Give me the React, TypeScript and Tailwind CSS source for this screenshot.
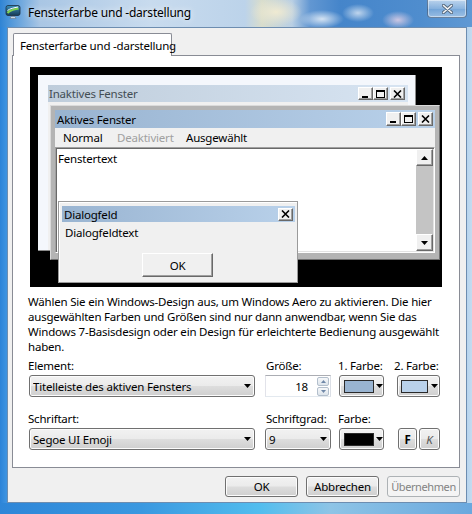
import React from "react";

const win7Btn =
  "border border-[#707070] rounded-[3px] bg-[linear-gradient(180deg,#f2f2f2_0%,#ebebeb_48%,#dddddd_52%,#cfcfcf_100%)] shadow-[inset_0_0_0_1px_#fcfcfc]";

const classicRaised =
  "bg-[#f0f0f0] border border-t-white border-l-white border-r-[#696969] border-b-[#696969] shadow-[inset_-1px_-1px_0_#a0a0a0]";

function DownArrow({ color = "#000" }: { color?: string }) {
  return (
    <svg width="7" height="4" viewBox="0 0 7 4" className="shrink-0">
      <path d="M0 0H7L3.5 4Z" fill={color} />
    </svg>
  );
}

function CapBtn({ kind, w, h }: { kind: "min" | "max" | "close"; w: number; h: number }) {
  return (
    <div
      className={`${classicRaised} flex items-center justify-center shrink-0`}
      style={{ width: w, height: h }}
    >
      <svg width="9" height="8" viewBox="0 0 9 8">
        {kind === "min" && <rect x="1" y="6" width="6" height="2" fill="#000" />}
        {kind === "max" && (
          <path d="M0 0H9V8H0Z M1 2V7H8V2Z" fill="#000" fillRule="evenodd" />
        )}
        {kind === "close" && (
          <path d="M1 0.5L8 7.5M8 0.5L1 7.5" stroke="#000" strokeWidth="1.6" />
        )}
      </svg>
    </div>
  );
}

function ScrollBtn({ up }: { up: boolean }) {
  return (
    <div className={`${classicRaised} w-[17px] h-[17px] flex items-center justify-center`}>
      <svg width="7" height="4" viewBox="0 0 7 4">
        <path d={up ? "M0 4H7L3.5 0Z" : "M0 0H7L3.5 4Z"} fill="#000" />
      </svg>
    </div>
  );
}

function Preview() {
  return (
    <div className="relative ml-[2px] w-[412px] h-[220px] bg-black overflow-hidden">
      {/* inactive window */}
      <div className="absolute left-[8px] top-[8px] w-[378px] h-[176px] flex flex-col bg-[#f4f7fc] border-r border-b border-r-[#8a8a8a] border-b-[#8a8a8a] pl-[10px] pt-[10px] pr-[7px]">
        <div className="h-[17px] flex items-center bg-[linear-gradient(90deg,#bfcddb,#d7e4f2)] pl-[1px] pr-[3px]">
          <span className="flex-1 text-[#434e54]">Inaktives Fenster</span>
          <CapBtn kind="min" w={15} h={13} />
          <CapBtn kind="max" w={15} h={13} />
          <div className="w-[2px]" />
          <CapBtn kind="close" w={15} h={13} />
        </div>
        <div className="flex-1 bg-[#f0f0f0]" />
      </div>

      {/* active window */}
      <div className="absolute left-[20px] top-[38px] w-[390px] h-[155px] flex flex-col bg-[#b4b4b4] border border-t-[#dadada] border-l-[#dadada] border-r-[#6f6f6f] border-b-[#6f6f6f] px-[4px] pt-[4px] pb-[6px]">
        <div className="h-[18px] flex items-center bg-[linear-gradient(90deg,#99b4d1,#b9d1ea)] pl-[2px] pr-[2px]">
          <span className="flex-1">Aktives Fenster</span>
          <CapBtn kind="min" w={15} h={14} />
          <CapBtn kind="max" w={15} h={14} />
          <div className="w-[2px]" />
          <CapBtn kind="close" w={15} h={14} />
        </div>
        <div className="h-[19px] flex items-center bg-[#f0f0f0] pl-[8px]">
          <span className="w-[54px]">Normal</span>
          <span className="w-[69px] text-[#a0a0a0]">Deaktiviert</span>
          <span>Ausgewählt</span>
        </div>
        <div className="flex-1 flex bg-white border border-t-[#a0a0a0] border-l-[#a0a0a0] border-r-white border-b-white shadow-[inset_1px_1px_0_#696969,inset_-1px_-1px_0_#e3e3e3]">
          <div className="flex-1 flex m-[1px]">
            <div className="flex-1 pl-[1px] pt-[2px]">Fenstertext</div>
            <div className="w-[17px] flex flex-col bg-[#c4c4c4]">
              <ScrollBtn up />
              <div className="flex-1" />
              <ScrollBtn up={false} />
            </div>
          </div>
        </div>
      </div>

      {/* dialog */}
      <div className="absolute left-[28px] top-[134px] w-[240px] h-[82px] flex flex-col bg-[#f0f0f0] border border-[#9a9a9a] shadow-[inset_1px_1px_0_#ffffff] pl-[3px] pt-[4px] pr-[2px]">
        <div className="h-[16px] flex items-center bg-[linear-gradient(90deg,#99b4d1,#b9d1ea)] pl-[2px] pr-[2px]">
          <span className="flex-1">Dialogfeld</span>
          <CapBtn kind="close" w={15} h={13} />
        </div>
        <div className="pl-[3px] pt-[3px]">Dialogfeldtext</div>
        <div
          className={`${classicRaised} ml-[80px] mt-[13px] w-[71px] h-[24px] flex items-center justify-center`}
        >
          OK
        </div>
      </div>
    </div>
  );
}

function Combo({ text, w }: { text: string; w: number }) {
  return (
    <div className={`${win7Btn} h-[22px] flex items-center pl-[3px] pr-[3px]`} style={{ width: w }}>
      <span className="flex-1 whitespace-nowrap overflow-hidden">{text}</span>
      <DownArrow />
    </div>
  );
}

function ColorBtn({
  color,
  w,
  swatchW,
  padL,
  gap,
}: {
  color: string;
  w: number;
  swatchW: number;
  padL: number;
  gap: number;
}) {
  return (
    <div className={`${win7Btn} h-[22px] flex items-center`} style={{ width: w, paddingLeft: padL }}>
      <div
        className="h-[13px] border border-[#2a2a2a] shrink-0"
        style={{ width: swatchW, background: color }}
      />
      <div style={{ width: gap }} />
      <DownArrow />
    </div>
  );
}

function Spinner() {
  return (
    <div className="w-[66px] h-[22px] bg-white border border-[#abadb3] border-l-[#e2e3ea] border-r-[#dbdfe6] border-b-[#e3e9ef] flex items-center">
      <span className="flex-1 text-right pr-[9px]">18</span>
      <div className="w-[12px] mr-[1px] flex flex-col gap-[1px]">
        <div className="h-[9px] rounded-[2px] border border-[#b3bfcc] bg-[linear-gradient(180deg,#f6f8fa,#dde4eb)] flex items-center justify-center">
          <svg width="5" height="3" viewBox="0 0 5 3">
            <path d="M0 3H5L2.5 0Z" fill="#6f88a8" />
          </svg>
        </div>
        <div className="h-[9px] rounded-[2px] border border-[#b3bfcc] bg-[linear-gradient(180deg,#f6f8fa,#dde4eb)] flex items-center justify-center">
          <svg width="5" height="3" viewBox="0 0 5 3">
            <path d="M0 0H5L2.5 3Z" fill="#6f88a8" />
          </svg>
        </div>
      </div>
    </div>
  );
}

function AppIcon() {
  return (
    <svg width="16" height="16" viewBox="0 0 16 16" className="shrink-0">
      <defs>
        <linearGradient id="scr" x1="0" y1="0" x2="0" y2="1">
          <stop offset="0" stopColor="#3b8fb8" />
          <stop offset="1" stopColor="#163a56" />
        </linearGradient>
      </defs>
      <rect x="1" y="1.5" width="14" height="10" rx="2" fill="url(#scr)" stroke="#1c2f40" strokeWidth="0.8" />
      <path d="M2.5 9C5 6 9 5.5 13.5 4.5" stroke="#7fd34e" strokeWidth="2" fill="none" />
      <path d="M2.5 6.5C5 4.5 9 3.8 13 3" stroke="#ffffff" strokeWidth="1" fill="none" />
      <path d="M6 12.5h4l1 2H5Z" fill="#cfd8e0" stroke="#5a6a7a" strokeWidth="0.5" />
    </svg>
  );
}

function CloseX() {
  return (
    <svg width="11" height="10" viewBox="0 0 11 10">
      <path d="M1.5 1.5L9.5 8.5M9.5 1.5L1.5 8.5" stroke="#56687c" strokeWidth="3.4" strokeLinecap="round" />
      <path d="M1.5 1.5L9.5 8.5M9.5 1.5L1.5 8.5" stroke="#f4f6f8" strokeWidth="1.6" strokeLinecap="round" />
    </svg>
  );
}

export default function App() {
  return (
    <div className="relative w-[472px] h-[514px] overflow-hidden flex flex-col font-['Noto_Sans',sans-serif] text-[11.5px] leading-[15px] tracking-[-0.2px] text-black bg-[linear-gradient(90deg,#2b83d8_0px,#3c92e0_6px,#5f9fdc_30%,#76acdf_65%,#9fc6ea_97%,#c4dcf0_100%)]">
      {/* caption */}
      <div className="h-[27px] shrink-0 flex items-start bg-[radial-gradient(ellipse_26px_14px_at_276px_12px,#efead2_0%,transparent_100%),radial-gradient(ellipse_22px_9px_at_322px_19px,rgba(255,255,255,0.75),transparent),radial-gradient(ellipse_16px_9px_at_358px_13px,rgba(255,255,255,0.65),transparent),radial-gradient(ellipse_16px_9px_at_398px_20px,rgba(236,214,232,0.8),transparent),linear-gradient(90deg,#2f84d4_0px,#4f97da_10px,#a9c6e4_40px,#c8dbee_150px,#bcd3ea_245px,#d9ddcc_262px,#b9cfe4_292px,#6297d2_310px,#4585ca_340px,#4f8dce_420px,#5f99d4_472px)]">
        <div className="ml-[5px] mt-[4px] flex items-center gap-[7px] flex-1">
          <AppIcon />
          <span className="text-[12px] [text-shadow:0_0_6px_rgba(255,255,255,0.95)]">Fensterfarbe und -darstellung</span>
        </div>
        <div className="mr-[5px] w-[40px] h-[18px] rounded-b-[4px] border border-t-0 border-[rgba(40,62,92,0.55)] bg-[linear-gradient(180deg,rgba(255,255,255,0.6),rgba(255,255,255,0.3)_50%,rgba(255,255,255,0.18)_52%,rgba(255,255,255,0.4))] shadow-[inset_0_0_0_1px_rgba(255,255,255,0.45)] flex items-center justify-center">
          <CloseX />
        </div>
      </div>

      {/* client area */}
      <div className="ml-[7px] w-[460px] h-[476px] shrink-0 border border-[#6d8db0] bg-[#f0f0f0] flex flex-col">
        <div className="relative z-10 mt-[5px] ml-[5px] w-[159px] h-[23px] bg-white border border-b-0 border-[#898c95] rounded-t-[2px] pl-[6px] pt-[4px] whitespace-nowrap">
          Fensterfarbe und -darstellung
        </div>
        <div className="ml-[4px] -mt-[1px] w-[448px] h-[413px] border border-[#898c95] bg-white pl-[15px] pt-[11px]">
          <Preview />

          <p className="mt-[7px] whitespace-nowrap">
            Wählen Sie ein Windows-Design aus, um Windows Aero zu aktivieren. Die hier
            <br />
            ausgewählten Farben und Größen sind nur dann anwendbar, wenn Sie das
            <br />
            Windows 7-Basisdesign oder ein Design für erleichterte Bedienung ausgewählt
            <br />
            haben.
          </p>

          {/* element row */}
          <div className="mt-[4px] flex">
            <div className="ml-[1px] w-[226px]">
              <div className="-ml-[1px] h-[15px]">Element:</div>
              <div className="mt-[2px]">
                <Combo text="Titelleiste des aktiven Fensters" w={226} />
              </div>
            </div>
            <div className="ml-[10px] w-[66px]">
              <div className="ml-[1px] h-[15px]">Größe:</div>
              <div className="mt-[2px]">
                <Spinner />
              </div>
            </div>
            <div className="ml-[8px] w-[45px]">
              <div className="-ml-[1px] h-[15px] whitespace-nowrap">1. Farbe:</div>
              <div className="mt-[2px]">
                <ColorBtn color="#99b4d1" w={45} swatchW={30} padL={4} gap={2} />
              </div>
            </div>
            <div className="ml-[13px] w-[43px]">
              <div className="-ml-[3px] h-[15px] whitespace-nowrap">2. Farbe:</div>
              <div className="mt-[2px]">
                <ColorBtn color="#b9d1ea" w={43} swatchW={27} padL={3} gap={3} />
              </div>
            </div>
          </div>

          {/* font row */}
          <div className="mt-[14px] flex">
            <div className="ml-[1px] w-[226px]">
              <div className="-ml-[1px] h-[15px]">Schriftart:</div>
              <div className="mt-[2px]">
                <Combo text="Segoe UI Emoji" w={226} />
              </div>
            </div>
            <div className="ml-[10px] w-[66px]">
              <div className="ml-[1px] h-[15px] whitespace-nowrap">Schriftgrad:</div>
              <div className="mt-[2px]">
                <Combo text="9" w={66} />
              </div>
            </div>
            <div className="ml-[8px] w-[45px]">
              <div className="-ml-[1px] h-[15px]">Farbe:</div>
              <div className="mt-[2px]">
                <ColorBtn color="#000000" w={45} swatchW={30} padL={4} gap={2} />
              </div>
            </div>
            <div className="ml-[14px] flex gap-[2px] pt-[17px]">
              <div className={`${win7Btn} w-[19px] h-[22px] flex items-center justify-center font-bold`}>F</div>
              <div className={`${win7Btn} w-[21px] h-[22px] flex items-center justify-center italic text-[#555]`}>K</div>
            </div>
          </div>
        </div>

        {/* dialog buttons */}
        <div className="mt-[8px] mr-[6px] flex justify-end gap-[8px]">
          <div className={`${win7Btn} w-[73px] h-[21px] flex items-center justify-center`}>OK</div>
          <div className={`${win7Btn} w-[73px] h-[21px] flex items-center justify-center`}>Abbrechen</div>
          <div className="w-[73px] h-[21px] rounded-[3px] border border-[#adb2b5] bg-[#f4f4f4] text-[#838383] text-[11px] tracking-[-0.4px] flex items-center justify-center whitespace-nowrap">
            Übernehmen
          </div>
        </div>
      </div>

      {/* lower frame */}
      <div className="flex-1 bg-[linear-gradient(90deg,#2e86d8,#3a98e0_30%,#52bdee_55%,#8ec4e6_70%,#6aa8de)]" />
    </div>
  );
}
